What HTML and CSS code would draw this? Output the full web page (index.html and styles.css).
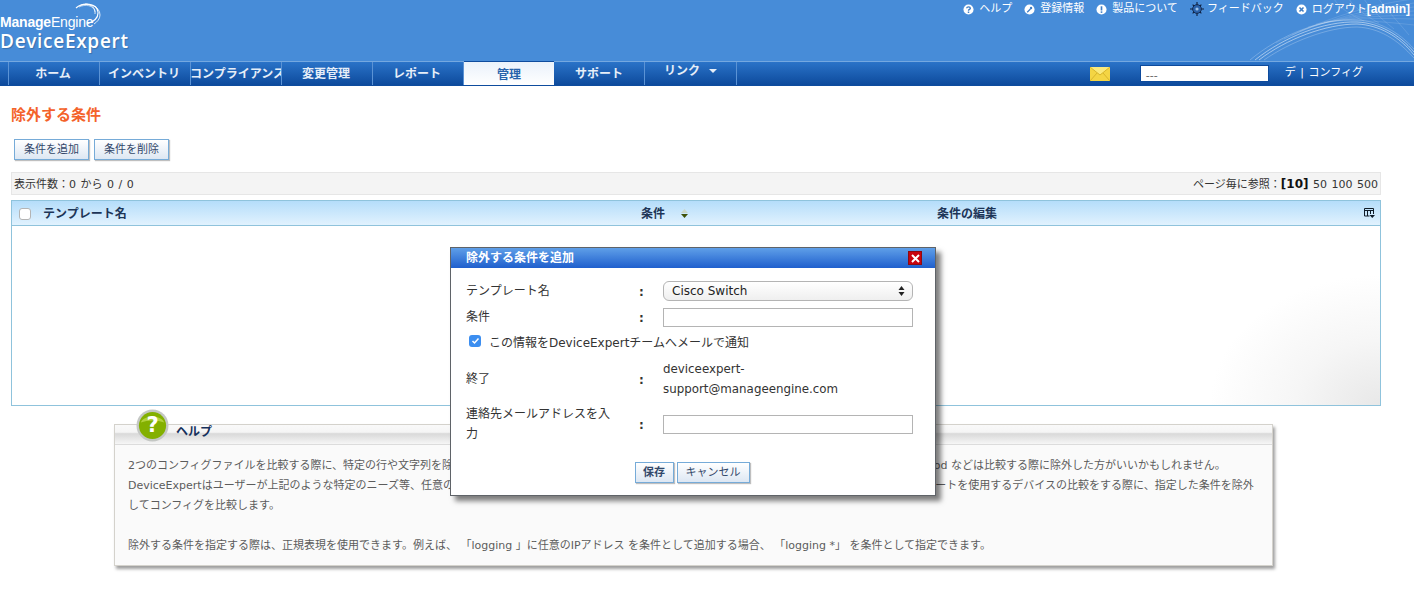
FILE: index.html
```html
<!DOCTYPE html>
<html lang="ja">
<head>
<meta charset="utf-8">
<title>除外する条件</title>
<link rel="stylesheet" href="styles.css">
</head>
<body>
<header class="banner">
  <div class="logo">
    <div class="logo-me"><b>Manage</b>Engine
      <svg class="swoosh" width="30" height="24" viewBox="0 0 30 24" fill="none" stroke="#fff"><path d="M4 5C11 -1 25 0 26 9c.5 6-5 10-11 12" stroke-width="1.1"/><path d="M9 2c8-2 19 1 19 10 0 4-3 7-6 9" stroke-width=".8"/><path d="M13 1c6 0 11 4 10 10" stroke-width=".8"/><path d="M7 4c6-3 15-2 16 5" stroke-width=".6"/></svg>
    </div>
    <div class="logo-de">DeviceExpert</div>
  </div>
  <svg class="waves" width="200" height="62" viewBox="0 0 200 62" fill="none" stroke="#fff">
    <path class="w1" d="M41 61C70 38 110 22 143 23C165 24 185 35 200 53"/>
    <path class="w1" d="M45 61C72 40 112 25 143 25C165 26 185 37 200 56"/>
    <path class="w2" d="M36 61C66 36 108 19 143 21C165 22 185 33 200 50"/>
    <path class="w2" d="M50 61C76 43 114 28 143 28C165 29 183 40 200 59"/>
    <path class="w3" d="M62 44C100 24 150 6 200 0"/>
    <path class="w3" d="M70 40C106 22 152 10 200 4"/>
    <path class="w3" d="M78 36C112 20 154 13 200 8"/>
    <path class="w3" d="M86 32C118 19 156 15 200 12"/>
    <path class="w3" d="M94 28C124 19 158 17 200 16"/>
    <path class="w3" d="M102 25C130 19 160 19 200 20"/>
    <path class="w3" d="M110 23C136 20 164 22 200 26"/>
    <path class="w3" d="M120 0C125 8 136 16 150 22"/>
    <path class="w3" d="M135 0C140 8 150 16 165 24"/>
    <path class="w3" d="M150 0C155 8 165 18 180 30"/>
    <path class="w3" d="M165 0C170 8 180 18 195 36"/>
  </svg>
  <nav class="toplinks">
    <a><svg class="ti" viewBox="0 0 12 12"><circle cx="6" cy="6" r="5.5" fill="#fff"/><path d="M4 4.6C4.2 2.6 8 2.700 8 4.600 8 6 6 5.800 6 7.300" fill="none" stroke="#3c7cc4" stroke-width="1.5"/><rect x="5.200" y="8.200" width="1.600" height="1.600" fill="#3c7cc4"/></svg>ヘルプ</a>
    <a><svg class="ti" viewBox="0 0 12 12"><circle cx="6" cy="6" r="5.5" fill="#fff"/><path d="M3.500 9 7 5.500" stroke="#3c7cc4" stroke-width="1.400"/><circle cx="7.700" cy="4.300" r="1.300" fill="#3c7cc4"/></svg>登録情報</a>
    <a><svg class="ti" viewBox="0 0 12 12"><circle cx="6" cy="6" r="5.5" fill="#fff"/><rect x="5.100" y="2.500" width="1.800" height="4.600" fill="#3c7cc4"/><rect x="5.100" y="8" width="1.800" height="1.700" fill="#3c7cc4"/></svg>製品について</a>
    <a><svg class="ti ti-f" viewBox="0 0 16 16"><path d="M8 0v16M0 8h16M3 3l10 10M13 3 3 13" stroke="#10203f" stroke-width="1.300"/><circle cx="8" cy="8" r="5" fill="#2a62ab" stroke="#10203f"/><circle cx="8" cy="8" r="1.800" fill="#9cc3ea"/></svg>フィードバック</a>
    <a><svg class="ti" viewBox="0 0 12 12"><circle cx="6" cy="6" r="5.5" fill="#fff"/><path d="M3.800 3.800l4.400 4.400M8.200 3.800 3.800 8.200" stroke="#3c7cc4" stroke-width="1.700"/></svg><span>ログアウト<b class="admin">[admin]</b></span></a>
  </nav>
</header>
<nav class="menubar">
  <div class="menu-lead"></div>
  <a class="tab">ホーム</a>
  <a class="tab">インベントリ</a>
  <a class="tab tab-clip"><span>コンプライアンス</span></a>
  <a class="tab">変更管理</a>
  <a class="tab">レポート</a>
  <a class="tab tab-on">管理</a>
  <a class="tab tab-r">サポート</a>
  <a class="tab tab-r tab-link">リンク<i class="caret"></i></a>
  <div class="menu-right">
    <svg class="mail" width="20" height="14" viewBox="0 0 20 14"><rect width="20" height="14" fill="#f4d544"/><path d="M0 0l10 8 10-8" fill="#fbe97c" stroke="#d8b52c"/><path d="M0 14l7-8M20 14l-7-8" stroke="#d8b52c"/></svg>
    <div class="devbox">---</div>
    <a class="cfg">デ | コンフィグ</a>
  </div>
</nav>
<main class="content">
  <h1 class="title">除外する条件</h1>
  <div class="actions">
    <button class="btn">条件を追加</button>
    <button class="btn">条件を削除</button>
  </div>
  <div class="pager">
    <span>表示件数：0 から 0 / 0</span>
    <span>ページ毎に参照：<b class="cur">[10]</b> 50 100 500</span>
  </div>
  <section class="grid">
    <div class="grid-head">
      <div class="gc gc-name"><i class="box"></i>テンプレート名</div>
      <div class="gc gc-cond">条件<svg class="sort" width="7" height="9" viewBox="0 0 7 9"><path d="M3.500 0 7 4H0z" fill="#c9d6c8"/><path d="M0 5h7L3.500 9z" fill="#3f5208"/></svg></div>
      <div class="gc gc-edit">条件の編集</div>
      <svg class="colicon" width="11" height="10" viewBox="0 0 11 10" fill="none" stroke="#101c28"><path d="M.5 8V.5h9V6M.5 2.500h9M3.500 2.500V8M6.500 2.500V6M.5 8h5"/><path d="M5.500 7h5.500L8.250 10z" fill="#101c28" stroke="none"/></svg>
    </div>
    <div class="grid-body"></div>
  </section>
  <section class="help">
    <div class="help-head">
      <svg class="help-ico" width="33" height="33" viewBox="0 0 34 34"><circle cx="17" cy="17" r="16.500" fill="#c4c7c4"/><circle cx="17" cy="17" r="14" fill="#83b000"/><path d="M5 14C7 6 27 6 29 14 22 11 12 11 5 14z" fill="#b2d23e"/></svg>
      <span class="help-q">?</span>
      <span class="help-title">ヘルプ</span>
    </div>
    <div class="help-body">
      <p>2つのコンフィグファイルを比較する際に、特定の行や文字列を除外したい場合があります。例えば、コンフィグの中で頻繁に値が変更される項目のntp clock-period などは比較する際に除外した方がいいかもしれません。</p>
      <p>DeviceExpertはユーザーが上記のような特定のニーズ等、任意の条件を除外として追加する機能を提供しています。除外する条件を追加すると、指定したテンプレートを使用するデバイスの比較をする際に、指定した条件を除外<br>してコンフィグを比較します。</p>
      <p class="gap">除外する条件を指定する際は、正規表現を使用できます。例えば、 「logging 」に任意のIPアドレス を条件として追加する場合、 「logging *」 を条件として指定できます。</p>
    </div>
  </section>
</main>
<div class="dialog">
  <div class="dlg-head">
    <span>除外する条件を追加</span>
    <i class="dlg-x"><svg width="9" height="9" viewBox="0 0 9 9"><path d="M1 1l7 7M8 1 1 8" stroke="#fff" stroke-width="2"/></svg></i>
  </div>
  <div class="dlg-body">
    <div class="frow r-select"><label>テンプレート名</label><span class="colon">:</span>
      <div class="select">Cisco Switch<svg width="7" height="12" viewBox="0 0 7 12" fill="#222"><path d="M3.500 1 6.500 5H.5zM3.500 11 .5 7h6z"/></svg></div></div>
    <div class="frow r-cond"><label>条件</label><span class="colon">:</span><div class="inp"></div></div>
    <div class="check"><i class="tick"><svg width="9" height="8" viewBox="0 0 9 8" fill="none"><path d="M1.500 4 3.500 6 7.500 1.500" stroke="#fff" stroke-width="1.500"/></svg></i>この情報をDeviceExpertチームへメールで通知</div>
    <div class="frow r-to"><label>終了</label><span class="colon">:</span><div class="to">deviceexpert-<br>support@manageengine.com</div></div>
    <div class="frow r-mail"><label>連絡先メールアドレスを入力</label><span class="colon">:</span><div class="inp"></div></div>
    <div class="dlg-actions"><button class="btn btn-b">保存</button><button class="btn">キャンセル</button></div>
  </div>
</div>
</body>
</html>
```
FILE: styles.css
```css
* { box-sizing: border-box; }
html, body { margin: 0; padding: 0; }
body {
  width: 1414px; height: 589px; overflow: hidden; background: #fff;
  font-family: "DejaVu Sans", "Noto Sans CJK JP", sans-serif;
  font-size: 11px; color: #333;
}
.banner { height: 61px; background: #478cd8; display: flex; justify-content: space-between; overflow: hidden; position: relative; }
.logo { padding-top: 12px; color: #fff; }
.logo-me { font: 14px/20px "Liberation Sans", sans-serif; letter-spacing: -.2px; position: relative; height: 21px; }
.logo-me b { font-weight: 700; }
.swoosh { position: absolute; left: 72px; top: -9px; }
.logo-de { font: 600 19px/22px "Open Sans", sans-serif; letter-spacing: .7px; margin-top: -3px; text-shadow: 1px 1px 1px rgba(0,0,0,.2); }
.waves { position: absolute; right: 0; bottom: 0; }
.w1 { stroke-opacity: .5; stroke-width: 1; }
.w2 { stroke-opacity: .3; stroke-width: .8; }
.w3 { stroke-opacity: .16; stroke-width: .8; }
.toplinks { position: relative; display: flex; gap: 12px; height: 16px; align-items: center; margin-top: 1px; padding-right: 4px; font-size: 11px; line-height: 16px; color: #fff; }
.toplinks a { display: flex; align-items: center; gap: 5px; white-space: nowrap; }
.ti { width: 11px; height: 11px; flex: none; }
.ti-f { width: 14px; height: 14px; margin-right: -2px; }
.admin { font: 700 12px/16px "Liberation Sans", sans-serif; }
.menubar { height: 25px; display: flex; background: linear-gradient(#2a73c8, #0d4a9c); border-top: 1px solid #74a8e0; border-bottom: 1px solid #0e4c9e; color: #fff; font-size: 12px; font-weight: 700; }
.menu-lead { width: 9px; border-right: 1px solid #5b93d5; }
.tab { width: 91px; flex: none; text-align: center; line-height: 24px; padding-right: 2px; border-right: 1px solid #5b93d5; white-space: nowrap; overflow: hidden; color: #e6eef8; }
.tab-r { padding-right: 0; }
.tab-clip { padding-right: 0; }
.tab-clip span { display: block; width: 94px; margin-left: -1px; text-align: left; }
.tab-on { width: 90px; padding: 1px 0 0; background: linear-gradient(#eaf2fb, #fff); color: #2763ab; border: 0; height: 24px; line-height: 25px; border-top: 1px solid #0e4c9e; margin-top: -1px; }
.tab-link { width: 92px; line-height: 19px; }
.caret { display: inline-block; margin-left: 9px; vertical-align: 2px; border: 4px solid transparent; border-top-color: #e6eef8; border-bottom: 0; }
.menu-right { margin-left: auto; display: flex; align-items: center; height: 23px; padding-right: 51px; }
.mail { margin-right: 30px; margin-top: 1px; }
.devbox { width: 129px; height: 17px; background: #fff; color: #666; font: 400 11px/19px "DejaVu Sans", sans-serif; padding-left: 5px; margin-right: 16px; border: 1px solid #0d4a9c; }
.cfg { font-size: 11px; font-weight: 400; word-spacing: 1px; line-height: 15px; margin-top: -3px; white-space: nowrap; }
.content { padding: 0 33px 0 11px; }
.title { margin: 19px 0 0; font-size: 15px; line-height: 20px; font-weight: 700; color: #f4622a; }
.actions { display: flex; gap: 5px; margin: 14px 0 0 3px; height: 21px; }
.actions .btn { padding: 0 9px; }
.btn { height: 21px; padding: 0 8px; font: 400 11px/17px "DejaVu Sans", "Noto Sans CJK JP", sans-serif; color: #33486a; border: 1px solid #76abd8; background: linear-gradient(#fff, #dde7f3); box-shadow: 1px 1px 1px rgba(0,0,0,.25); white-space: nowrap; }
.pager { display: flex; justify-content: space-between; align-items: center; height: 23px; margin-top: 12px; padding: 0 2px 2px; background: #f4f4f4; border: 1px solid #e6e6e6; color: #333; font-size: 11px; word-spacing: 1px; }
.cur { color: #111; font-size: 12px; }
.grid { margin-top: 5px; height: 206px; border: 1px solid #8fc3dc; position: relative; display: flex; flex-direction: column; }
.grid-head { height: 25px; flex: none; display: flex; align-items: center; padding-bottom: 1px; background: linear-gradient(#b5ddfa, #e1f2fe); border-bottom: 1px solid #8fc3dc; font-size: 12px; font-weight: 700; color: #1d3557; position: relative; }
.gc { white-space: nowrap; display: flex; align-items: center; }
.gc-name { width: 629px; padding-left: 7px; }
.box { width: 12px; height: 12px; background: #fff; border: 1px solid #b4b4b4; border-radius: 3px; margin: 2px 12px 0 0; }
.gc-cond { width: 296px; }
.sort { margin: 2px 0 0 16px; }
.colicon { position: absolute; right: 5px; top: 7px; }
.grid-body { flex: 1; background: radial-gradient(170px 130px at 100% 100%, #e8e8e8, #f6f6f6 50%, #fff 100%); }
.help { position: relative; width: 1159px; margin: 18px 0 0 103px; border: 1px solid #d4d2cc; background: #fafafa; box-shadow: 2px 3px 3px rgba(0,0,0,.38); height: 142px; }
.help-head { height: 20px; background: linear-gradient(#f9f9f9, #f5f5f5 38%, #d9d9d9 46%, #f6f6f6); border-bottom: 1px solid #dcdcdc; position: relative; }
.help-ico { position: absolute; left: 21px; top: -16px; }
.help-q { position: absolute; left: 21px; top: -16px; width: 33px; text-align: center; font: 700 21px/33px "DejaVu Sans", sans-serif; color: #fff; }
.help-title { position: absolute; left: 61px; top: -1px; font-size: 12px; line-height: 16px; font-weight: 700; color: #16315c; }
.help-body { padding: 11px 13px 0; font-size: 11px; line-height: 20px; color: #5c5c5c; }
.help-body p { margin: 0; }
.help-body .gap { margin-top: 20px; }
.dialog { position: absolute; left: 450px; top: 247px; width: 486px; height: 249px; background: #fff; border: 1px solid #5f6368; box-shadow: 5px 5px 5px rgba(0,0,0,.5); font-size: 12px; color: #333; }
.dlg-head { height: 20px; background: linear-gradient(#5f9fe8, #1f5fcd); display: flex; align-items: center; justify-content: space-between; padding: 0 13px 0 15px; color: #fff; font-weight: 700; font-size: 12px; }
.dlg-head span { margin-top: -3px; }
.dlg-x { width: 14px; height: 14px; background: #c8030e; border: 1px solid #8d0a10; display: flex; align-items: center; justify-content: center; }
.dlg-body { padding: 13px 15px 0; }
.frow { display: grid; grid-template-columns: 173px 24px 250px; align-items: center; }
.frow label { line-height: 20px; padding-right: 20px; }
.colon { font-weight: 700; padding-top: 1px; }
.r-select { height: 20px; }
.r-cond { height: 20px; margin-top: 6px; }
.r-to { margin-top: 8px; height: 40px; }
.r-mail { margin-top: 5px; height: 40px; }
.select { height: 20px; border: 1px solid #b4b4b4; border-radius: 6px; background: linear-gradient(#fff, #efefef); display: flex; align-items: center; justify-content: space-between; padding: 0 7px 0 8px; color: #222; font-size: 12px; }
.inp { height: 19px; border: 1px solid #b4b4b4; background: #fff; }
.to { line-height: 20px; font-size: 11.850px; }
.check { display: flex; align-items: center; margin: 4px 0 0 3px; height: 20px; }
.tick { width: 12px; height: 12px; border-radius: 3px; background: #3c8ef0; display: flex; align-items: center; justify-content: center; margin-right: 8px; }
.dlg-actions { display: flex; justify-content: center; gap: 3px; margin-top: 18px; padding-right: 2px; }
.dlg-actions .btn-b { font-weight: 700; padding: 0 7.500px; }
```
